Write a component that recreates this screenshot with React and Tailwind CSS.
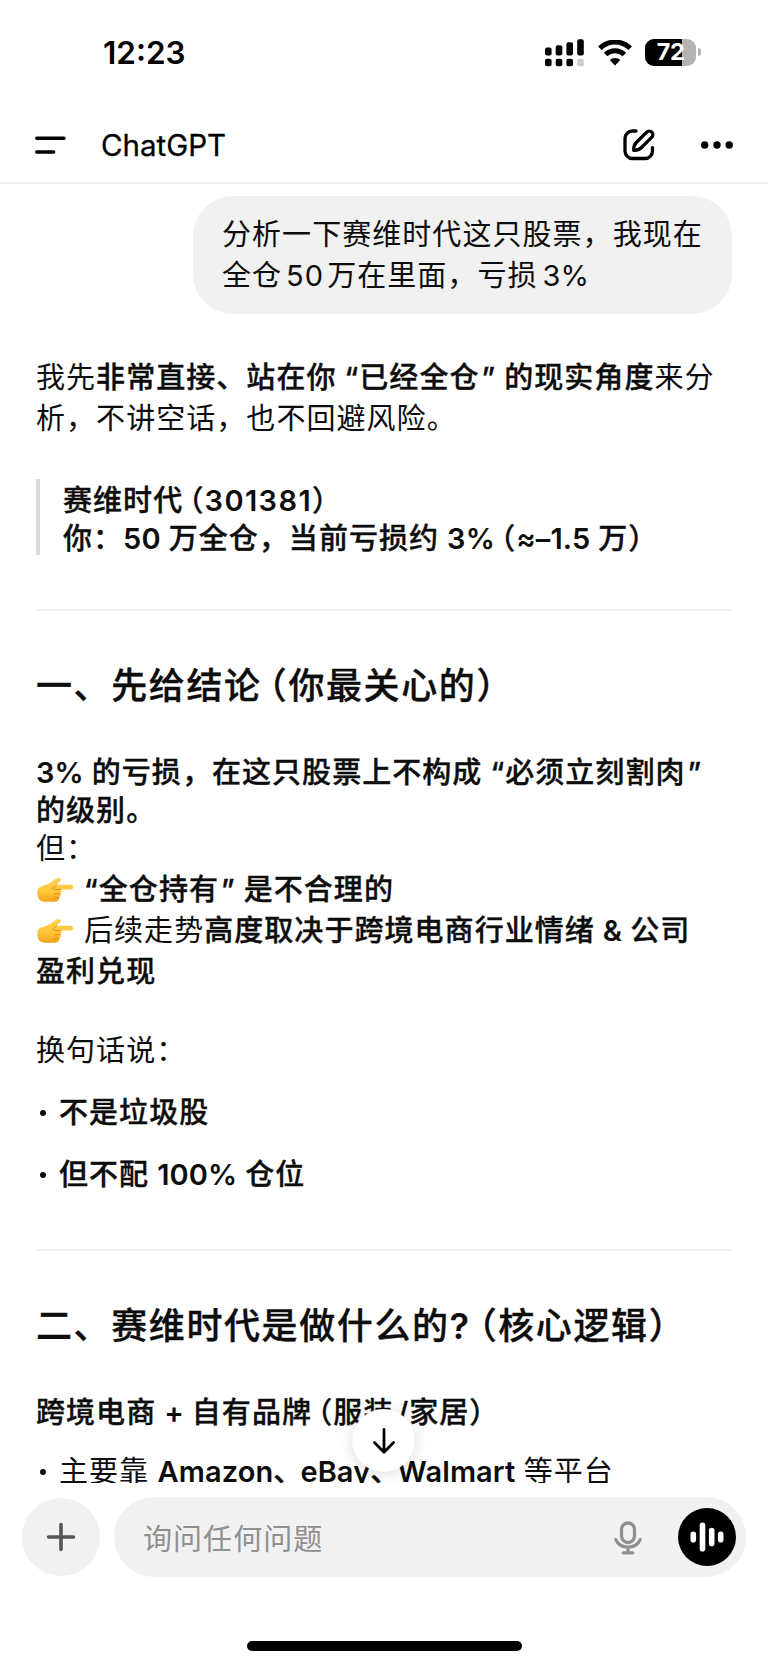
const PointRight = () => (
    <svg viewBox="0 0 38 26" className="inline-block w-[38px] h-[26px] mr-[10px] align-[-3px]">
        <defs>
            <linearGradient id="skin" x1="0" y1="0" x2="0" y2="1">
                <stop offset="0" stopColor="#ffd253" />
                <stop offset="0.6" stopColor="#ffc535" />
                <stop offset="1" stopColor="#f2a01e" />
            </linearGradient>
        </defs>
        <path
            d="M2.2 11.5C4.5 9 7 9.2 10 7.8C13.500 6.200 16 4.500 19 2.400C21 1 24.700 .6 24.900 2.600C25 4.600 21.500 6 20.400 7.800H34.500C38.200 7.800 38.200 12.500 34.500 12.500H24.600C26 14 25.400 16 24.300 16.700C25 18.500 24.300 20 23.100 20.600C23.400 23.200 21.800 24.600 19 24.700C14 25 8 25 4.400 23.400C1.200 21.800 .6 14.500 2.200 11.500Z"
            fill="url(#skin)"
        />
        <path d="M20.400 7.900C19.600 10 18 11 16.200 11.400M24.600 12.500H18.500M24.300 16.800H18.300M23.100 20.700H18" fill="none" stroke="#e0901c" strokeWidth="1" strokeLinecap="round" />
    </svg>
);

// Brackets take half the width of a Chinese character
const Open = ({ className = 'ml-[0.2em]' }) => <span className={`[font-feature-settings:'halt'] ${className}`}>（</span>;
const Close = () => <span className="[font-feature-settings:'halt']">）</span>;

const Latin = ({ children }) => <span className="tracking-[0.1px] font-semibold [-webkit-text-stroke:0]">{children}</span>;

const Digits = ({ children }) => <span className="tracking-[1.4px] font-semibold [-webkit-text-stroke:0]">{children}</span>;

const Quote = ({ children }) => <>“{children}<span className="ml-[2px]">”</span></>;

const Comma = () => <span className="-mr-[3px]">、</span>;

const Bold = ({ children }) => <strong className="font-medium [-webkit-text-stroke:0.35px]">{children}</strong>;

const Bullet = ({ children }) => (
    <li className="flex items-center">
        <span className="w-[6px] h-[6px] ml-1 mr-[13px] rounded-full bg-[#0d0d0d]" />
        <span>{children}</span>
    </li>
);

function StatusBar() {
    return (
        <div className="h-[106px] flex items-center pl-[103px] pr-[67px]">
            <span className="text-[31.5px] font-semibold text-black">12:23</span>
            <div className="ml-auto flex items-center">
                <svg width="39" height="28" viewBox="0 0 39 28" className="mr-[14px]">
                    <rect x="0" y="8.500" width="6.600" height="8" rx="2" />
                    <rect x="10.700" y="6.200" width="6.600" height="10.300" rx="2" />
                    <rect x="21.400" y="3.200" width="6.600" height="13.300" rx="2" />
                    <rect x="32.200" y="0.200" width="6.600" height="16.300" rx="2" />
                    <rect x="0" y="19.800" width="6.600" height="7.400" rx="2" />
                    <rect x="10.700" y="19.800" width="6.600" height="7.400" rx="2" />
                    <rect x="21.400" y="19.800" width="6.600" height="7.400" rx="2" />
                    <rect x="32.200" y="19.800" width="6.600" height="7.400" rx="2" fill="#cccccc" />
                </svg>
                <svg width="34" height="26" viewBox="0 0 34 26" className="mr-[13px] -mt-[1px]">
                    <path d="M1.800 8.300A21.500 21.500 0 0 1 32.200 8.300" fill="none" stroke="#000" strokeWidth="5" />
                    <path d="M7.600 14.500A13.500 13.500 0 0 1 26.400 14.500" fill="none" stroke="#000" strokeWidth="5" />
                    <path d="M17 25.500L11.700 20.100A7.600 7.600 0 0 1 22.300 20.100Z" />
                </svg>
                <div className="relative w-[51px] h-[27px] -mt-[2px] rounded-[9px] overflow-hidden bg-[#b3b3b3] flex items-center justify-center">
                    <div className="absolute inset-y-0 left-0 w-[37px] bg-black" />
                    <span className="relative text-[23.500px] leading-none font-bold text-white tracking-[-0.5px]">72</span>
                </div>
                <div className="w-[3px] h-[8px] -mt-[2px] ml-[2px] rounded-r-full bg-[#b3b3b3]" />
            </div>
        </div>
    );
}

function Header() {
    return (
        <header className="h-[78px] pt-[2px] flex items-center pl-[35px] pr-[34px] border-b-2 border-[#f3f3f3]">
            <svg width="31" height="18" viewBox="0 0 31 18" stroke="#000" strokeWidth="3.500" strokeLinecap="round">
                <path d="M1.800 2.300H29M1.800 15.900H18.600" />
            </svg>
            <h1 className="ml-[35px] text-[29.500px] text-black [-webkit-text-stroke:0.3px]">ChatGPT</h1>
            <svg width="32" height="32" viewBox="0 0 32 32" className="ml-auto" fill="none" stroke="#000" strokeWidth="3.300" strokeLinecap="round" strokeLinejoin="round">
                <path d="M13 2H9.500A7.500 7.500 0 0 0 2 9.500V22A7.500 7.500 0 0 0 9.500 29.500H22A7.500 7.500 0 0 0 29.500 22V18.600" />
                <path d="M10.700 21.300C10.400 17.800 11.200 15.600 13.300 13.500L23.700 3.100A3.600 3.600 0 0 1 28.800 8.200L18.500 18.500C16.400 20.600 14.200 21.600 10.700 21.300Z" />
            </svg>
            <svg width="34" height="8" viewBox="0 0 34 8" className="ml-[45px]">
                <circle cx="4.700" cy="4" r="3.700" />
                <circle cx="17" cy="4" r="3.700" />
                <circle cx="29.200" cy="4" r="3.700" />
            </svg>
        </header>
    );
}

function Composer() {
    return (
        <div className="mt-[14px] flex items-center pl-[22px] pr-[22px] gap-[14px]">
            <button className="w-[78px] h-[78px] rounded-full bg-[#f1f1f1] flex items-center justify-center">
                <svg width="30" height="30" viewBox="0 0 30 30" stroke="#555" strokeWidth="3.600" strokeLinecap="round">
                    <path d="M15 2.600V27.400M2.600 15H27.400" />
                </svg>
            </button>
            <div className="flex-1 h-[80px] rounded-full bg-[#f1f1f1] flex items-center pl-[29px] pr-[10px]">
                <span className="text-[#8f8f8f] text-[29px] mt-[6px]">询问任何问题</span>
                <svg width="28" height="34" viewBox="0 0 28 34" className="ml-auto mr-[36px] mt-[2px]" fill="none" stroke="#8f8f8f" strokeWidth="3.300" strokeLinecap="round">
                    <rect x="7.500" y="2" width="13" height="19.500" rx="6.500" />
                    <path d="M1.900 18.600C6 28.500 22 28.500 26.100 18.600M14 26.500V31.500M9.200 31.800H18.800" />
                </svg>
                <button className="w-[58px] h-[58px] rounded-full bg-black flex items-center justify-center">
                    <svg width="34" height="30" viewBox="0 0 34 30" stroke="#fff" strokeWidth="5.600" strokeLinecap="round">
                        <path d="M3.300 12.200V17.800M12.500 3.300V26.700M21.700 8.600V21.400M30.700 12.200V17.800" />
                    </svg>
                </button>
            </div>
        </div>
    );
}

export default function App() {
    return (
        <div className="w-[768px] h-[1665px] overflow-hidden bg-white text-[#0d0d0d] text-[29px] leading-[38px] tracking-[1.05px] [word-spacing:-0.8px] [font-family:Inter,'Noto_Sans_CJK_SC',sans-serif]">
            <div className="tracking-normal">
                <StatusBar />
                <Header />
            </div>

            <div className="relative">
                <main className="h-[1299px] overflow-hidden px-[36px] pt-[12px] whitespace-nowrap">
                    {/* User message */}
                    <div className="w-[539px] h-[118px] ml-auto rounded-[40px] bg-[#f1f1f1] pl-[29px] py-[18px] leading-[41px]">
                        <p>分析一下赛维时代这只股票，我现在</p>
                        <p>全仓<span className="ml-[4px] mr-[3px]">50</span>万在里面，亏损<span className="ml-[5px] tracking-normal">3%</span></p>
                    </div>

                    {/* Assistant reply */}
                    <div className="mt-[43px] leading-[41px]">
                        <p>我先<Bold>非常直接、站在你 <Quote>已经全仓</Quote> 的现实角度</Bold>来分</p>
                        <p>析，不讲空话，也不回避风险。</p>
                    </div>

                    <blockquote className="mt-[40px] h-[76px] pt-[3px] pl-[23px] border-l-4 border-[#dcdcdc]">
                        <Bold>
                            <p>赛维时代<Open /><Digits>301381</Digits><Close /></p>
                            <p>你：<Latin>50</Latin> 万全仓，当前亏损约 <Latin>3%</Latin><Open /><Latin>≈–1.5</Latin> 万<Close /></p>
                        </Bold>
                    </blockquote>

                    <hr className="mt-[54px] border-t-2 border-[#f0f0f0]" />

                    <h2 className="mt-[51px] text-[36px] leading-[48px] tracking-[1.6px]"><Bold>一、先给结论<Open />你最关心的<Close /></Bold></h2>

                    <div className="mt-[44px]">
                        <p><Bold><Latin>3%</Latin> 的亏损，在这只股票上不构成 <Quote>必须立刻割肉</Quote></Bold></p>
                        <p><Bold>的级别。</Bold></p>
                        <p>但：</p>
                        <div className="leading-[41px] mt-[1px]">
                            <p><PointRight /><Bold><Quote>全仓持有</Quote> 是不合理的</Bold></p>
                            <p><PointRight />后续走势<Bold>高度取决于跨境电商行业情绪 <Latin>&</Latin> 公司</Bold></p>
                            <p><Bold>盈利兑现</Bold></p>
                        </div>
                    </div>

                    <p className="mt-[40px]">换句话说：</p>
                    <ul className="mt-[24px] space-y-[24px]">
                        <Bullet><Bold>不是垃圾股</Bold></Bullet>
                        <Bullet><Bold>但不配 <Latin>100%</Latin> 仓位</Bold></Bullet>
                    </ul>

                    <hr className="mt-[55px] border-t-2 border-[#f0f0f0]" />

                    <h2 className="mt-[51px] text-[36px] leading-[48px] tracking-[1.6px]"><Bold>二、赛维时代是做什么的<Latin>?</Latin><Open className="ml-[0.26em]" />核心逻辑<Close /></Bold></h2>

                    <p className="mt-[44px]"><Bold>跨境电商 <Latin>+</Latin> 自有品牌<Open />服装<span className="ml-[4px]">/</span>家居<Close /></Bold></p>
                    <ul className="mt-[21px]">
                        <Bullet>主要靠 <Bold><Latin>Amazon</Latin><Comma /><Latin>eBay</Latin><Comma /><Latin>Walmart</Latin></Bold> 等平台</Bullet>
                    </ul>
                </main>

                {/* Scroll to bottom */}
                <button className="absolute left-[352px] bottom-[11px] w-[63px] h-[63px] rounded-full bg-white shadow-[0_2px_14px_rgba(0,0,0,0.14)] flex items-center justify-center">
                    <svg width="24" height="28" viewBox="0 0 24 28" fill="none" stroke="#000" strokeWidth="2.800" strokeLinecap="round" strokeLinejoin="round">
                        <path d="M12 2.400V25.200M2.400 15.600L12 25.200L21.600 15.600" />
                    </svg>
                </button>
            </div>

            <Composer />

            <div className="mt-[64px] w-[275px] h-[10px] mx-auto rounded-full bg-black" />
        </div>
    );
}
